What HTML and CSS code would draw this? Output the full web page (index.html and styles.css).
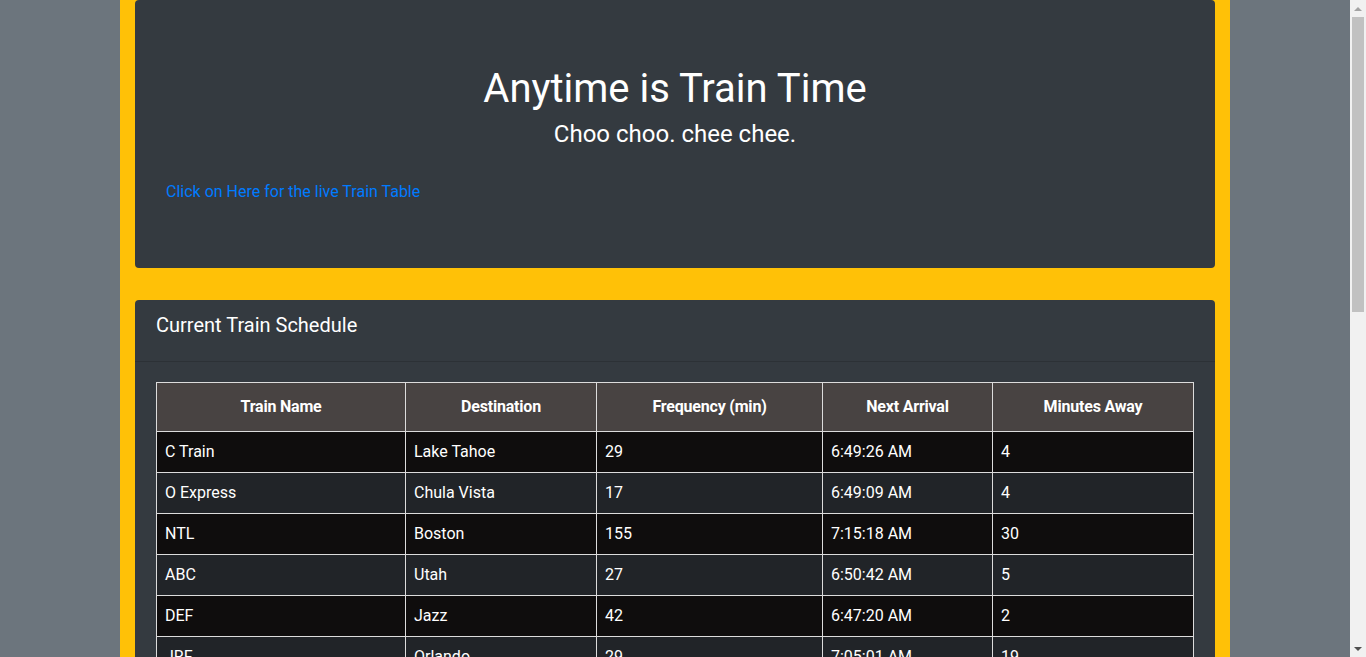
FILE: index.html
```html
<!DOCTYPE html>
<html lang="en">
<head>
<meta charset="utf-8">
<title>Train Time</title>
<link rel="stylesheet" href="styles.css">
</head>
<body>
<div class="page">
  <div class="container">
    <div class="jumbotron">
      <h1 class="title">Anytime is Train Time</h1>
      <h4 class="subtitle">Choo choo. chee chee.</h4>
      <p class="lead-link"><a href="#">Click on Here for the live Train Table</a></p>
    </div>
    <div class="card">
      <div class="card-header"><h5 class="card-title">Current Train Schedule</h5></div>
      <div class="card-body">
        <table class="trains">
          <colgroup>
            <col class="c1"><col class="c2"><col class="c3"><col class="c4"><col class="c5">
          </colgroup>
          <thead>
            <tr><th>Train Name</th><th>Destination</th><th>Frequency (min)</th><th>Next Arrival</th><th>Minutes Away</th></tr>
          </thead>
          <tbody>
            <tr><td>C Train</td><td>Lake Tahoe</td><td>29</td><td>6:49:26 AM</td><td>4</td></tr>
            <tr><td>O Express</td><td>Chula Vista</td><td>17</td><td>6:49:09 AM</td><td>4</td></tr>
            <tr><td>NTL</td><td>Boston</td><td>155</td><td>7:15:18 AM</td><td>30</td></tr>
            <tr><td>ABC</td><td>Utah</td><td>27</td><td>6:50:42 AM</td><td>5</td></tr>
            <tr><td>DEF</td><td>Jazz</td><td>42</td><td>6:47:20 AM</td><td>2</td></tr>
            <tr><td>JRF</td><td>Orlando</td><td>29</td><td>7:05:01 AM</td><td>19</td></tr>
          </tbody>
        </table>
      </div>
    </div>
  </div>
</div>
<div class="scrollbar">
  <div class="sb-btn"><span class="arrow-up"></span></div>
  <div class="sb-track"><div class="sb-thumb"></div></div>
  <div class="sb-btn"><span class="arrow-down"></span></div>
</div>
</body>
</html>
```

FILE: styles.css
```css
* { box-sizing: border-box; }
html, body { margin: 0; padding: 0; height: 100%; overflow: hidden; }
body {
  display: flex;
  font-family: Roboto, "Liberation Sans", sans-serif;
  font-size: 16px;
  line-height: 1.5;
  color: #fff;
  background: #6c757d;
}
.page { flex: 1; height: 100vh; overflow: hidden; }
.container {
  width: 1110px;
  margin: 0 auto;
  background: #ffc107;
  padding: 0 15px;
  min-height: 100%;
}
.jumbotron {
  background: #343a40;
  border-radius: 4px;
  padding: 64px 31px 64px;
  margin-bottom: 32px;
}
.title {
  margin: 1px 0 7px;
  font-size: 40px;
  font-weight: 400;
  line-height: 1.2;
  text-align: center;
}
.subtitle {
  margin: 0 0 31px;
  font-size: 24px;
  font-weight: 400;
  line-height: 1.2;
  text-align: center;
}
.lead-link { margin: 0; }
.lead-link a { color: #007bff; text-decoration: none; }
.card {
  background: #343a40;
  border-radius: 4px;
  overflow: hidden;
}
.card-header {
  padding: 13px 21px 13px;
  border-bottom: 1px solid #2c3136;
}
.card-title {
  margin: 0 0 11px;
  font-size: 20px;
  font-weight: 400;
  line-height: 1.2;
}
.card-body { padding: 20px 21px; }
.trains {
  width: 1037px;
  border-collapse: collapse;
  table-layout: fixed;
}
.c1 { width: 249px; }
.c2 { width: 191px; }
.c3 { width: 226px; }
.c4 { width: 170px; }
.c5 { width: 201px; }
.trains th, .trains td { border: 1px solid #dcdcdc; }
.trains th {
  background: #484342;
  font-weight: 700;
  text-align: center;
  padding: 12px 8px;
  letter-spacing: -0.2px;
}
.trains td { padding: 8px 8px 8px 8px; }
.trains tbody tr:nth-child(odd) td { background: #0f0d0d; }
.trains tbody tr:nth-child(even) td { background: #212428; }
.scrollbar {
  width: 16px;
  height: 100vh;
  background: #f1f1f1;
  display: flex;
  flex-direction: column;
}
.sb-btn { height: 17px; display: flex; align-items: center; justify-content: center; }
.sb-track { flex: 1; padding: 0 2px; }
.sb-thumb { height: 295px; background: #c1c1c1; }
.arrow-up {
  width: 0; height: 0;
  border-left: 4px solid transparent;
  border-right: 4px solid transparent;
  border-bottom: 4px solid #a3a3a3;
}
.arrow-down {
  width: 0; height: 0;
  border-left: 4px solid transparent;
  border-right: 4px solid transparent;
  border-top: 4px solid #505050;
}
```
